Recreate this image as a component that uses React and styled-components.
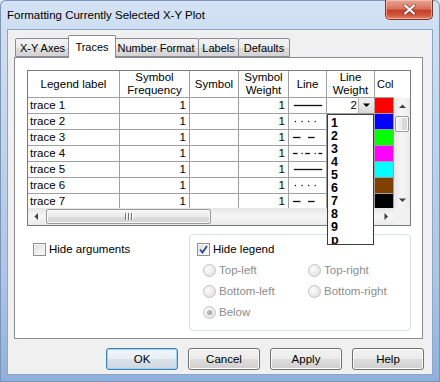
import React from 'react';
import styled, { createGlobalStyle } from 'styled-components';

const FONT = `"Liberation Sans", Arial, sans-serif`;

const Global = createGlobalStyle`
  html, body { margin: 0; padding: 0; }
  body { width: 440px; height: 382px; overflow: hidden; background: #dfe8f3; font-family: ${FONT}; }
`;

const Window = styled.div`
  width: 440px;
  height: 382px;
  box-sizing: border-box;
  display: flex;
  flex-direction: column;
  border-radius: 6px 6px 0 0;
  background: linear-gradient(180deg, #d3e2f4 0%, #c3d7ef 30%, #aac4e6 75%, #8fb0dd 100%);
  box-shadow: inset 0 0 0 1px #7d94b4;
  font-family: ${FONT};
  font-size: 11px;
  color: #000;
`;

const TitleBar = styled.div`
  height: 30px;
  display: flex;
  align-items: flex-start;
  flex-shrink: 0;
`;

const TitleText = styled.div`
  margin: 7px 0 0 7px;
  font-size: 11.5px;
  line-height: 16px;
  color: #000;
`;

const CloseButton = styled.div`
  margin-left: auto;
  margin-right: 7px;
  width: 48px;
  height: 20px;
  box-sizing: border-box;
  border: 1px solid #83352a;
  border-top: none;
  border-radius: 0 0 5px 5px;
  background: linear-gradient(180deg, #e8a493 0%, #d9735f 45%, #c5412a 55%, #d0553c 80%, #e18a6f 100%);
  box-shadow: inset 0 0 0 1px rgba(255, 220, 210, 0.5);
  display: flex;
  align-items: center;
  justify-content: center;
`;

const Client = styled.div`
  flex: 1;
  margin: 0 8px 8px 8px;
  background: #f0f0f0;
  box-shadow: 0 0 0 1px #8ea6c6;
  display: flex;
  flex-direction: column;
  padding: 5px 8px 0 6px;
`;

const TabStrip = styled.div`
  display: flex;
  align-items: flex-end;
  height: 22px;
  padding-left: 1px;
  position: relative;
  z-index: 1;
`;

const Tab = styled.div`
  width: ${(p) => p.$w}px;
  height: ${(p) => (p.$active ? 23 : 19)}px;
  margin-left: ${(p) => (p.$active ? -2 : p.$first ? 0 : -1)}px;
  margin-right: ${(p) => (p.$active ? -2 : 0)}px;
  margin-bottom: ${(p) => (p.$active ? -1 : 0)}px;
  box-sizing: border-box;
  border: 1px solid #898c95;
  border-bottom: ${(p) => (p.$active ? 'none' : '1px solid #898c95')};
  border-radius: 2px 2px 0 0;
  background: ${(p) =>
    p.$active ? '#ffffff' : 'linear-gradient(180deg, #f3f3f3 0%, #ebebeb 50%, #dedede 51%, #d4d4d4 100%)'};
  position: relative;
  z-index: ${(p) => (p.$active ? 2 : 1)};
  display: flex;
  align-items: ${(p) => (p.$active ? 'flex-start' : 'center')};
  padding-top: ${(p) => (p.$active ? 3 : 0)}px;
  justify-content: center;
  font-size: 11px;
  line-height: 16px;
  white-space: nowrap;
`;

const Panel = styled.div`
  height: 282px;
  margin-right: 1px;
  box-sizing: border-box;
  border: 1px solid #898c95;
  background: #fff;
  padding: 12px 0 0 12px;
  display: flex;
  flex-direction: column;
`;

const GridBox = styled.div`
  position: relative;
  width: 384px;
  height: 156px;
  box-sizing: border-box;
  border: 1px solid #7a7a7a;
  background: #fff;
  display: grid;
  grid-template-columns: 366px 16px;
  grid-template-rows: 27px 110px 17px;
`;

const COLS = '92px 70px 49px 50px 38px 48px 19px';

const HeaderRow = styled.div`
  display: grid;
  grid-template-columns: ${COLS};
  position: relative;
  z-index: 1;
`;

const HeaderCell = styled.div`
  box-sizing: border-box;
  border-right: ${(p) => (p.$last ? 'none' : '1px solid #a0a0a0')};
  border-bottom: 1px solid #a0a0a0;
  display: flex;
  align-items: center;
  justify-content: ${(p) => (p.$last ? 'flex-start' : 'center')};
  padding-left: ${(p) => (p.$last ? 2 : 0)}px;
  text-align: center;
  font-size: ${(p) => (p.$last ? 11 : 11.5)}px;
  line-height: 13px;
  color: #000;
  background: #fff;
  overflow: ${(p) => (p.$last ? 'visible' : 'hidden')};
  white-space: nowrap;
`;

const Blank = styled.div`
  background: ${(p) => p.$bg || 'transparent'};
`;

const Body = styled.div`
  overflow: hidden;
`;

const Row = styled.div`
  display: grid;
  grid-template-columns: ${COLS};
  height: 16px;
`;

const Cell = styled.div`
  box-sizing: border-box;
  border-right: 1px solid #a0a0a0;
  border-bottom: 1px solid #a0a0a0;
  display: flex;
  align-items: center;
  justify-content: ${(p) => (p.$right ? 'flex-end' : 'flex-start')};
  padding: 0 ${(p) => (p.$right ? 3 : 0)}px 0 ${(p) => (p.$right ? 0 : 2)}px;
  font-size: 11.5px;
  line-height: 15px;
  background: ${(p) => p.$bg || '#fff'};
  overflow: hidden;
  white-space: nowrap;
`;

const ComboCell = styled.div`
  box-sizing: border-box;
  border-right: 1px solid #a0a0a0;
  border-bottom: 1px solid #a0a0a0;
  display: flex;
  align-items: stretch;
  background: #fff;
`;

const ComboValue = styled.div`
  flex: 1;
  text-align: right;
  padding-right: 1px;
  font-size: 11.5px;
  line-height: 15px;
`;

const ComboButton = styled.div`
  width: 16px;
  box-sizing: border-box;
  border-left: 1px solid #b5b5b5;
  background: linear-gradient(180deg, #f2f2f2 0%, #e6e6e6 50%, #d8d8d8 100%);
  display: flex;
  align-items: center;
  justify-content: center;
`;

const VScroll = styled.div`
  display: flex;
  flex-direction: column;
  background: linear-gradient(90deg, #e6e6e6 0%, #f4f4f4 40%, #f4f4f4 60%, #e9e9e9 100%);
`;

const HScroll = styled.div`
  display: flex;
  align-items: stretch;
  background: linear-gradient(180deg, #e6e6e6 0%, #f4f4f4 40%, #f4f4f4 60%, #e9e9e9 100%);
`;

const ArrowBtn = styled.div`
  width: 16px;
  height: ${(p) => (p.$h ? 'auto' : '16px')};
  flex-shrink: 0;
  display: flex;
  align-items: center;
  justify-content: center;
`;

const Track = styled.div`
  flex: 1;
  display: flex;
  flex-direction: ${(p) => (p.$h ? 'row' : 'column')};
  padding: ${(p) => (p.$h ? '1px 0' : '0 1px')};
`;

const Thumb = styled.div`
  box-sizing: border-box;
  ${(p) => (p.$h ? `width: ${p.$size}px; margin-left: ${p.$offset}px;` : `height: ${p.$size}px; margin-top: ${p.$offset}px;`)}
  border: 1px solid #9a9a9a;
  border-radius: 2px;
  background: ${(p) =>
    p.$h
      ? 'linear-gradient(180deg, #f5f5f5 0%, #ececec 50%, #dcdcdc 51%, #d4d4d4 100%)'
      : 'linear-gradient(90deg, #f5f5f5 0%, #ececec 50%, #dcdcdc 51%, #d4d4d4 100%)'};
  box-shadow: inset 0 0 0 1px #fbfbfb;
  display: flex;
  align-items: center;
  justify-content: center;
`;

const Grip = styled.div`
  display: flex;
  gap: 1px;
`;

const GripLine = styled.div`
  width: 1px;
  height: 7px;
  background: #707070;
  box-shadow: 1px 0 0 #fff;
  margin-right: 1px;
`;

const DropList = styled.div`
  position: absolute;
  left: 299px;
  top: 43px;
  width: 47px;
  height: 131px;
  box-sizing: border-box;
  border: 1px solid #3c3c3c;
  background: #fff;
  overflow: hidden;
  padding-top: 2px;
  z-index: 5;
`;

const DropItem = styled.div`
  height: 13px;
  line-height: 13px;
  padding-left: 3px;
  font-family: "Liberation Sans", Arial, sans-serif;
  font-weight: bold;
  font-size: 12.5px;
  color: #000;
`;

const BottomArea = styled.div`
  width: 384px;
  display: flex;
  margin-top: 8px;
`;

const CheckRow = styled.label`
  display: flex;
  align-items: center;
  gap: 3px;
  height: 15px;
  font-size: 11.5px;
  line-height: 15px;
  color: ${(p) => (p.$disabled ? '#8d8d8d' : '#000')};
`;

const LeftOptions = styled.div`
  padding: 8px 0 0 6px;
`;

const CheckBox = styled.div`
  width: 13px;
  height: 13px;
  box-sizing: border-box;
  border: 1px solid #8e8f8f;
  background: linear-gradient(135deg, #dcdcdc 0%, #f0f0f0 60%, #fbfbfb 100%);
  box-shadow: inset 0 0 0 1px #f4f4f4;
  display: flex;
  align-items: center;
  justify-content: center;
`;

const GroupBox = styled.div`
  margin-left: auto;
  width: 222px;
  height: 97px;
  box-sizing: border-box;
  border: 1px solid #d5dfe5;
  border-radius: 4px;
  padding: 7px 0 0 7px;
  display: flex;
  flex-direction: column;
`;

const RadioGrid = styled.div`
  display: grid;
  grid-template-columns: 105px 100px;
  grid-auto-rows: 21px;
  margin: 3px 0 0 6px;
  align-items: center;
`;

const RadioCircle = styled.div`
  width: 13px;
  height: 13px;
  box-sizing: border-box;
  border-radius: 50%;
  border: 1px solid #c4c4c4;
  background: radial-gradient(circle at 35% 35%, #fbfbfb 0%, #ececec 50%, #dadada 100%);
  display: flex;
  align-items: center;
  justify-content: center;
`;

const RadioDot = styled.div`
  width: 5px;
  height: 5px;
  border-radius: 50%;
  background: radial-gradient(circle at 40% 40%, #c8c8c8 0%, #8c8c8c 100%);
`;

const ButtonRow = styled.div`
  display: flex;
  justify-content: flex-end;
  gap: 10px;
  margin-top: 9px;
`;

const Button = styled.div`
  width: 72px;
  height: 22px;
  box-sizing: border-box;
  border: 1px solid ${(p) => (p.$default ? '#3c7fb1' : '#707070')};
  border-radius: 3px;
  background: ${(p) =>
    p.$default
      ? 'linear-gradient(180deg, #f1f5f9 0%, #e8eef4 50%, #d9e2ea 51%, #cfd9e2 100%)'
      : 'linear-gradient(180deg, #f2f2f2 0%, #ebebeb 50%, #dddddd 51%, #cfcfcf 100%)'};
  box-shadow: inset 0 0 0 1px ${(p) => (p.$default ? '#9fd3f5' : '#fbfbfb')};
  display: flex;
  align-items: center;
  justify-content: center;
  font-size: 11.5px;
  color: #000;
`;

const Arrow = ({ dir, color = '#404040' }) => {
  const pts = {
    up: '0,4 7,4 3.5,0.5',
    down: '0,0.5 7,0.5 3.5,4',
    left: '4,0 4,7 0.5,3.5',
    right: '0.5,0 0.5,7 4,3.5',
  }[dir];
  const horiz = dir === 'left' || dir === 'right';
  return (
    <svg width={horiz ? 5 : 7} height={horiz ? 7 : 5} viewBox={horiz ? '0 0 5 7' : '0 0 7 5'}>
      <polygon points={pts} fill={color} />
    </svg>
  );
};

const LINES = {
  solid: [[3, 30]],
  dot: [[4, 1.3], [11, 1.3], [18, 1.3], [25, 1.3]],
  dash: [[2, 8], [18, 7]],
  dashdot: [[2, 5], [11, 1.3], [15, 5], [25, 1.3], [29, 4]],
};

const LineSample = ({ kind }) => (
  <svg width="37" height="15" viewBox="0 0 37 15">
    {LINES[kind].map(([x, w], i) => (
      <rect key={i} x={x} y={6.8} width={w} height={1.4} fill="#111" />
    ))}
  </svg>
);

const rows = [
  { label: 'trace 1', line: 'solid', color: '#ff0000' },
  { label: 'trace 2', line: 'dot', color: '#0000ff' },
  { label: 'trace 3', line: 'dash', color: '#00ff00' },
  { label: 'trace 4', line: 'dashdot', color: '#ff00ff' },
  { label: 'trace 5', line: 'solid', color: '#00ffff' },
  { label: 'trace 6', line: 'dot', color: '#804000' },
  { label: 'trace 7', line: 'dash', color: '#000000' },
];

const tabs = [
  { label: 'X-Y Axes', w: 55 },
  { label: 'Traces', w: 48, active: true },
  { label: 'Number Format', w: 86 },
  { label: 'Labels', w: 41 },
  { label: 'Defaults', w: 52 },
];

const Check = () => (
  <svg width="9" height="9" viewBox="0 0 9 9">
    <path d="M1 4.5 L3.5 7.5 L8 1" fill="none" stroke="#2a4a8c" strokeWidth="1.8" />
  </svg>
);

const Radio = ({ label, checked }) => (
  <CheckRow $disabled>
    <RadioCircle>{checked && <RadioDot />}</RadioCircle>
    {label}
  </CheckRow>
);

export default function App() {
  return (
    <>
      <Global />
      <Window>
        <TitleBar>
          <TitleText>Formatting Currently Selected X-Y Plot</TitleText>
          <CloseButton>
            <svg width="13" height="11" viewBox="0 0 13 11">
              <path d="M2 1.5 L11 9.5 M11 1.5 L2 9.5" stroke="#5a1a10" strokeWidth="3.6" strokeLinecap="round" opacity="0.6" />
              <path d="M2 1.5 L11 9.5 M11 1.5 L2 9.5" stroke="#ffffff" strokeWidth="2.2" strokeLinecap="round" />
            </svg>
          </CloseButton>
        </TitleBar>
        <Client>
          <TabStrip>
            {tabs.map((t, i) => (
              <Tab key={t.label} $w={t.w} $active={t.active} $first={i === 0}>
                {t.label}
              </Tab>
            ))}
          </TabStrip>
          <Panel>
            <GridBox>
              <HeaderRow>
                <HeaderCell>Legend label</HeaderCell>
                <HeaderCell>Symbol<br />Frequency</HeaderCell>
                <HeaderCell>Symbol</HeaderCell>
                <HeaderCell>Symbol<br />Weight</HeaderCell>
                <HeaderCell>Line</HeaderCell>
                <HeaderCell>Line<br />Weight</HeaderCell>
                <HeaderCell $last>Col</HeaderCell>
              </HeaderRow>
              <Blank />
              <Body>
                {rows.map((r, i) => (
                  <Row key={r.label}>
                    <Cell>{r.label}</Cell>
                    <Cell $right>1</Cell>
                    <Cell />
                    <Cell $right>1</Cell>
                    <Cell>
                      <LineSample kind={r.line} />
                    </Cell>
                    {i === 0 ? (
                      <ComboCell>
                        <ComboValue>2</ComboValue>
                        <ComboButton>
                          <Arrow dir="down" color="#000" />
                        </ComboButton>
                      </ComboCell>
                    ) : (
                      <Cell $right>1</Cell>
                    )}
                    <Cell $bg={r.color} />
                  </Row>
                ))}
              </Body>
              <VScroll>
                <ArrowBtn>
                  <Arrow dir="up" />
                </ArrowBtn>
                <Track>
                  <Thumb $size={16} $offset={2} />
                </Track>
                <ArrowBtn>
                  <Arrow dir="down" />
                </ArrowBtn>
              </VScroll>
              <HScroll>
                <ArrowBtn $h>
                  <Arrow dir="left" />
                </ArrowBtn>
                <Track $h>
                  <Thumb $h $size={165} $offset={2}>
                    <Grip>
                      <GripLine />
                      <GripLine />
                      <GripLine />
                    </Grip>
                  </Thumb>
                </Track>
                <ArrowBtn $h>
                  <Arrow dir="right" />
                </ArrowBtn>
              </HScroll>
              <Blank $bg="#f0f0f0" />
              <DropList>
                {['1', '2', '3', '4', '5', '6', '7', '8', '9', 'p'].map((v) => (
                  <DropItem key={v}>{v}</DropItem>
                ))}
              </DropList>
            </GridBox>
            <BottomArea>
              <LeftOptions>
                <CheckRow>
                  <CheckBox />
                  Hide arguments
                </CheckRow>
              </LeftOptions>
              <GroupBox>
                <CheckRow>
                  <CheckBox>
                    <Check />
                  </CheckBox>
                  Hide legend
                </CheckRow>
                <RadioGrid>
                  <Radio label="Top-left" />
                  <Radio label="Top-right" />
                  <Radio label="Bottom-left" />
                  <Radio label="Bottom-right" />
                  <Radio label="Below" checked />
                </RadioGrid>
              </GroupBox>
            </BottomArea>
          </Panel>
          <ButtonRow>
            <Button $default>OK</Button>
            <Button>Cancel</Button>
            <Button>Apply</Button>
            <Button>Help</Button>
          </ButtonRow>
        </Client>
      </Window>
    </>
  );
}
